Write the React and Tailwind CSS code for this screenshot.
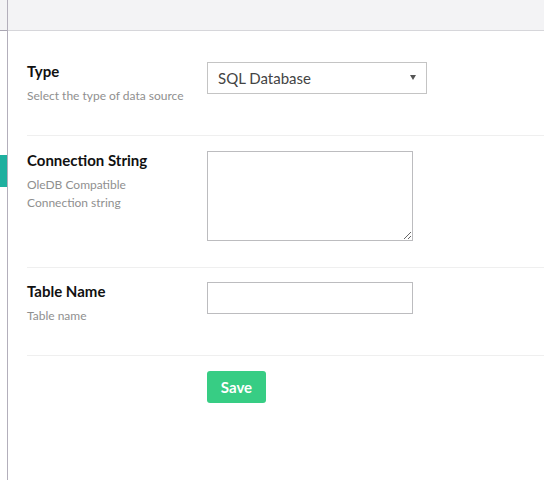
import { useState } from 'react';

function Row({ label, hint, children, className }) {
  return (
    <div className={`flex border-b border-[#efefef] ${className}`}>
      <div className="w-[180px] shrink-0">
        <div className="text-[15px] font-bold leading-[18px] text-[#111]">{label}</div>
        <div className="mt-[7px] text-[12px] leading-[18px] text-[#8f8f8f]">{hint}</div>
      </div>
      <div>{children}</div>
    </div>
  );
}

export default function App() {
  const [type, setType] = useState('sql');

  return (
    <div className="flex min-h-screen bg-white font-['Lato',sans-serif]">
      <aside className="w-[8px] shrink-0 border-r border-[#b3afbb]">
        <div className="h-[31px] border-b border-[#aaa6b3] bg-[#f3f3f5]" />
        <div className="mt-[124px] h-[32px] bg-[#1fb09f]" />
      </aside>

      <main className="flex-1">
        <div className="h-[31px] border-b border-[#d6d6da] bg-[#f3f3f5]" />

        <div className="pl-[19px] pt-[16px]">
          <Row label="Type" hint="Select the type of data source" className="h-[89px] pt-[15px]">
            <div className="relative">
              <select
                value={type}
                onChange={(e) => setType(e.target.value)}
                className="h-[32px] w-[220px] appearance-none border border-[#c4c4c4] bg-white pl-[10px] text-[15px] text-[#444] outline-none"
              >
                <option value="sql">SQL Database</option>
                <option value="csv">CSV File</option>
              </select>
              <span className="pointer-events-none absolute right-[11px] top-[13px] h-0 w-0 border-x-[3px] border-t-[5px] border-x-transparent border-t-[#555]" />
            </div>
          </Row>

          <Row
            label="Connection String"
            hint={
              <>
                OleDB Compatible
                <br />
                Connection string
              </>
            }
            className="h-[132px] pt-[15px]"
          >
            <textarea className="block h-[90px] w-[206px] border border-[#bcbcbf] outline-none" />
          </Row>

          <Row label="Table Name" hint="Table name" className="h-[88px] pt-[14px]">
            <input type="text" className="block h-[32px] w-[206px] border border-[#bcbcbf] outline-none" />
          </Row>

          <div className="pl-[180px] pt-[15px]">
            <button className="h-[32px] w-[59px] rounded-[3px] bg-[#37cd84] text-[15px] font-bold text-white">
              Save
            </button>
          </div>
        </div>
      </main>
    </div>
  );
}
